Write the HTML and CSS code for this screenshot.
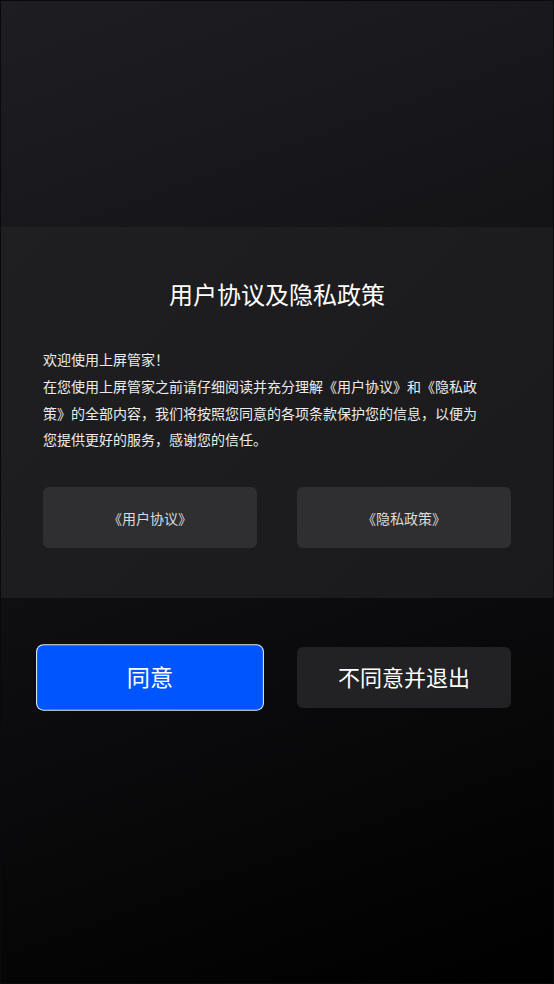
FILE: index.html
```html
<!DOCTYPE html>
<html lang="zh-CN">
<head>
<meta charset="utf-8">
<title>用户协议及隐私政策</title>
<link rel="stylesheet" href="styles.css">
</head>
<body>
<div class="screen">
  <section class="panel">
    <h1 class="title">用户协议及隐私政策</h1>
    <div class="content">
      <p>欢迎使用上屏管家！</p>
      <p>在您使用上屏管家之前请仔细阅读并充分理解《用户协议》和《隐私政策》的全部内容，我们将按照您同意的各项条款保护您的信息，以便为您提供更好的服务，感谢您的信任。</p>
    </div>
    <div class="links">
      <button class="link-btn">《用户协议》</button>
      <button class="link-btn">《隐私政策》</button>
    </div>
  </section>
  <div class="actions">
    <button class="act-btn primary">同意</button>
    <button class="act-btn">不同意并退出</button>
  </div>
</div>
</body>
</html>
```
FILE: styles.css
```css
html, body {
  margin: 0;
  padding: 0;
}
body {
  width: 554px;
  height: 984px;
  overflow: hidden;
  font-family: "Noto Sans CJK SC", "Noto Sans", sans-serif;
  color: #fff;
}
.screen {
  box-sizing: border-box;
  width: 554px;
  height: 984px;
  border: 1px solid #0a0a0c;
  background: linear-gradient(160deg, #1e1d22 0%, #111114 45%, #000000 100%);
  padding-top: 226px;
}
.panel {
  box-sizing: border-box;
  height: 371px;
  background: linear-gradient(135deg, #1f1f21 0%, #1a1a1c 100%);
  padding: 51px 42px 0 42px;
}
.title {
  margin: 0;
  font-size: 24px;
  line-height: 32px;
  font-weight: 400;
  text-align: center;
  color: #fff;
}
.content {
  margin-top: 36px;
  width: 442px;
  font-size: 14px;
  line-height: 26.8px;
  color: #ececec;
}
.content p {
  margin: 0;
}
.links {
  margin-top: 34px;
  display: flex;
  gap: 40px;
}
.link-btn {
  width: 214px;
  height: 61px;
  border: none;
  border-radius: 6px;
  background: #2f2f31;
  color: #dcdcdc;
  font-family: inherit;
  font-size: 14px;
  padding: 0;
}
.actions {
  margin-top: 49px;
  padding: 0 42px;
  display: flex;
  gap: 40px;
}
.act-btn {
  width: 214px;
  height: 61px;
  border: none;
  border-radius: 6px;
  background: #222224;
  color: #fff;
  font-family: inherit;
  font-size: 22px;
  line-height: 1;
  padding: 0 0 3px 0;
}
.act-btn.primary {
  background: #0055ff;
  box-shadow: 0 0 0 1px #e8ecf5;
  transform: scale(1.055);
}
```
